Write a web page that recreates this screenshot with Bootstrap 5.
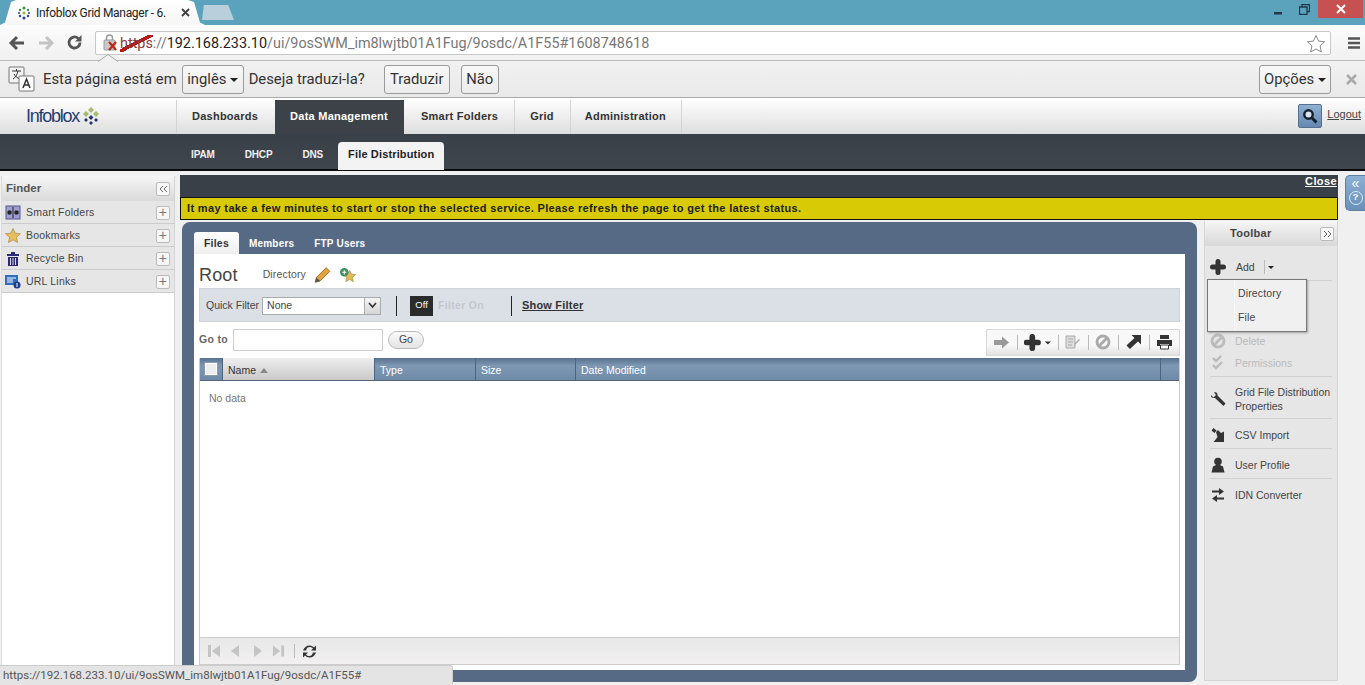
<!DOCTYPE html>
<html lang="pt">
<head>
    <meta charset="UTF-8">
    <meta name="viewport" content="width=device-width, initial-scale=1.0">
    <title>Infoblox Grid Manager</title>
    <link href="https://cdn.jsdelivr.net/npm/bootstrap@5.3.0/dist/css/bootstrap.min.css" rel="stylesheet">
    <style>
        html, body { height: 685px; overflow: hidden; }
        body { font-family: "Liberation Sans", Arial, sans-serif; font-size: 10.5px; color: #333; background: #f0f0f0; position: relative; width: 1365px; }

        /* browser chrome */
        .tab-strip { height: 25px; background: #5ba2bd; }
        .br-tab { width: 205px; height: 25px; background: linear-gradient(#fff, #f6f6f6); padding-left: 17px; font: 12px Roboto, sans-serif; color: #222; gap: 5px; clip-path: polygon(0 100%, 5px 90%, 11px 8%, 16px 0, 188px 0, 194px 8%, 200px 90%, 205px 100%); }
        .br-tab .tab-name { width: 140px; white-space: nowrap; overflow: hidden; letter-spacing: -.3px; }
        .new-tab { width: 32px; height: 15px; margin: 5px 0 0 -3px; background: #b9cfdc; clip-path: polygon(6% 0, 82% 0, 100% 100%, 0 100%); }
        .win-btns { margin-left: auto; padding-right: 2px; }
        .win-close { width: 45px; height: 18px; background: #c75050; }
        .win-ico { width: 27px; height: 19px; }
        .addr-row { height: 36px; background: linear-gradient(#fdfdfd, #f0f0f0); border-bottom: 1px solid #bcbcbc; padding-left: 2px; }
        .nav-ico { width: 29px; }
        .addr-box { width: 1236px; height: 24px; margin-left: 6px; background: #fff; border: 1px solid #c8c8c8; border-radius: 2px; font: 14.4px Roboto, sans-serif; color: #777; white-space: nowrap; padding: 1px 0 0 7px; }
        .addr-box b { font-weight: 400; color: #222; }
        .addr-url { margin-left: 1px; }
        .addr-box .bad-scheme { color: #8a3a3a; background: linear-gradient(to bottom right, transparent 42%, #b81818 42%, #b81818 54%, transparent 54%); }
        .trans-row { height: 37px; background: linear-gradient(#f1f1f1, #e9e9e9); border-bottom: 1px solid #aaa; font: 14.8px Roboto, sans-serif; color: #333; padding-left: 8px; white-space: nowrap; }
        .trans-btn { height: 29px; padding: 0; border: 1px solid #9a9a9a; border-radius: 3px; background: linear-gradient(#f8f8f8, #ececec); color: #333; font-size: 14.8px; }
        .btn-lang { width: 62px; margin: 0 5px; }
        .btn-yes { width: 66px; margin-left: 19px; }
        .btn-no { width: 38px; margin-left: 11px; }
        .btn-opts { width: 72px; margin-left: auto; }
        .bar-close { margin: 0 8px 0 15px; }
        .caret-dn { display: inline-block; width: 0; height: 0; border: 4px solid transparent; border-top-color: #222; border-bottom: 0; vertical-align: middle; }

        /* app header */
        .app-head { height: 36px; background: linear-gradient(#fff, #dedede); }
        .brand-box { width: 176px; padding-left: 26px; color: #1e3d73; font-size: 18px; letter-spacing: -1.25px; gap: 3px; }
        .main-tab { height: 34px; margin-top: 2px; padding-bottom: 2px !important; border-left: 1px solid #d4d4d4; font-size: 11px; font-weight: 700; color: #333; letter-spacing: .25px; white-space: nowrap; }
        .main-tab.on { background: #3c4248; color: #fff; border-left: 0; }
        .mt-dash { padding: 0 17px 0 15px; }
        .mt-data { padding: 0 16px 0 15px; }
        .mt-smart { padding: 0 16px 0 17px; border-left: 0; }
        .mt-grid { padding: 0 16px 0 15px; }
        .mt-admin { padding: 0 15px 0 14px; border-right: 1px solid #d4d4d4; }
        .head-right { margin-left: auto; padding: 6px 4px 0 0; gap: 5px; }
        .logout { font-size: 11px; color: #444; text-decoration: underline; margin-top: 2px; }
        .search-btn { width: 24px; height: 24px; background: linear-gradient(#8fb0d2, #6488b0); border: 1px solid #56708f; border-radius: 2px; }
        .sub-nav { height: 37px; background: linear-gradient(#3a4047, #3f454c); border-bottom: 2px solid #0c0c0c; padding-left: 176px; }
        .sub-item { padding: 5px 15px 0; color: #fff; font-size: 10px; font-weight: 700; letter-spacing: -.15px; height: 100%; opacity: .92; }
        .sub-item.on { background: #f3f3f3; color: #222; height: 28px; margin-top: 8px; padding: 0 10px 4px; border-radius: 4px 4px 0 0; font-size: 11px; letter-spacing: .15px; opacity: 1; align-self: flex-start; }

        /* finder */
        .work-area { height: 514px; }
        .finder-pane { width: 174px; margin-top: 5px; margin-left: 1px; background: #fff; border-right: 1px solid #d3d3d3; border-left: 1px solid #ddd; }
        .finder-head { height: 25px; background: linear-gradient(#f6f6f6, #d9d9d9); padding: 0 4px 0 4px; font-size: 11.5px; font-weight: 700; color: #555; letter-spacing: 0; }
        .finder-row { height: 23px; background: #e6e6e6; border-bottom: 1px solid #ccc; padding: 1px 4px 0 3px; font-size: 10.5px; color: #444; gap: 5px; letter-spacing: .2px; }
        .finder-row .plus-box { margin-left: auto; }
        .plus-box { width: 14px; height: 14px; background: #f7f7f7; border: 1px solid #bbb; border-radius: 2px; color: #777; font-size: 14px; line-height: 11px; text-align: center; }

        /* centre */
        .centre-pane { width: 1158px; margin-left: 5px; }
        .close-bar { height: 22px; margin-top: 4px; background: #3a4047; color: #fff; font-size: 11px; font-weight: 700; letter-spacing: .4px; line-height: 13px; text-align: right; padding: 0 1px 0 0; text-decoration: underline; }
        .warn-bar { height: 23px; background: #d8cb05; border: 1px solid #111; color: #222; font-size: 11px; font-weight: 700; padding-left: 6px; letter-spacing: .36px; line-height: 20px; }
        .blue-panel { width: 1015px; height: 460px; margin: 2px 0 0 2px; padding: 10px 12px 12px; background: #566a85; border-radius: 8px; }
        .panel-tabs { height: 22px; }
        .panel-tab { padding: 1px 10px 0; color: #fff; font-size: 10px; font-weight: 700; letter-spacing: .2px; }
        .panel-tab.on { background: linear-gradient(#fff, #eee); color: #333; border-radius: 3px 3px 0 0; font-size: 10.5px; }
        .panel-body { height: 416px; background: #fff; padding: 0 5px; }
        .title-row { height: 34px; padding-top: 8px; font-size: 10.5px; color: #555; letter-spacing: .15px; }
        .title-row h1 { font: 18px "Liberation Sans", sans-serif; color: #444; margin: 0 25px 0 0; }
        .filter-bar { height: 34px; background: #dbe0e7; border: 1px solid #cfd4da; padding: 1px 0 0 6px; font-size: 10.5px; color: #444; }
        .fake-select { width: 119px; height: 18px; background: #fff; border: 1px solid #aaa; margin-left: 3px; padding-left: 4px; }
        .sel-arrow { width: 16px; height: 16px; background: linear-gradient(#f5f5f5, #d5d5d5); border-left: 1px solid #aaa; margin-left: auto; }
        .v-sep { width: 1px; height: 20px; background: #222; }
        .sep-a { margin: 0 13px 0 15px; }
        .sep-b { margin: 0 10px 0 27px; }
        .off-tag { width: 23px; height: 20px; background: #2b2b2b; color: #fff; font-size: 9.5px; font-weight: 400; margin: 0 5px 0 0; }
        .filter-on { color: #c4c8cc; font-weight: 700; letter-spacing: .3px; }
        .show-filter { color: #333; font-size: 11px; font-weight: 700; letter-spacing: .2px; text-decoration: underline; }
        .goto-row { height: 36px; font-size: 10.5px; font-weight: 700; color: #666; letter-spacing: .3px; }
        .goto-input { width: 150px; height: 22px; background: #fff; border: 1px solid #ccc; margin: 0 5px; }
        .go-btn { width: 36px; height: 18px; border: 1px solid #bbb; border-radius: 9px; background: linear-gradient(#fafafa, #e3e3e3); color: #444; font-weight: 400; font-size: 10.5px; letter-spacing: 0; }
        .act-bar { margin-left: auto; width: 194px; height: 27px; margin-top: 4px; background: linear-gradient(#f8f8f8 60%, #e2e2e2); border: 1px solid #d8d8d8; padding: 0 6px; }
        .act-bar i { display: block; width: 1px; height: 15px; background: #bbb; }
        .grid-box { height: 307px; border: 1px solid #ccc; border-top: 0; }
        .grid-head { height: 23px; background: linear-gradient(#57718f, #7e98b3 35%, #6f8aa8); border-bottom: 1px solid #54657a; color: #fff; font-size: 10.5px; }
        .gcol { height: 100%; padding: 3px 0 0 5px; border-right: 1px solid #4d6480; }
        .gcol.chk { width: 23px; padding-top: 0; }
        .gcol.name { width: 152px; background: linear-gradient(#eee, #c9c9c9); color: #333; }
        .gcol.w-type { width: 101px; }
        .gcol.w-size { width: 100px; }
        .gcol.w-date { width: 585px; }
        .fake-chk { width: 12px; height: 12px; background: #eee; border: 1px solid #fff; outline: 1px solid #8a9bb0; }
        .grid-body { height: 256px; padding: 10px 9px; color: #777; font-size: 10.5px; }
        .grid-foot { height: 27px; background: linear-gradient(#e8e8e8, #f2f0f0); border-top: 1px solid #ccc; padding-left: 7px; gap: 9px; }
        .foot-sep { width: 1px; height: 14px; background: #bbb; margin-right: -2px; }

        /* toolbar */
        .tool-pane { width: 134px; height: 460px; margin: 1px 0 0 7px; background: #e6e6e6; border: 1px solid #d6d6d6; border-top: 0; }
        .tool-head { height: 25px; background: linear-gradient(#f5f5f5, #d8d8d8); font-size: 11px; font-weight: 700; color: #444; padding-left: 25px; padding-right: 3px; letter-spacing: .3px; }
        .tool-row { margin: 0 5px; gap: 9px; border-bottom: 1px solid #d0d0d0; font-size: 10.5px; color: #444; line-height: 14px; }
        .tool-row.off { color: #bbb; }
        .tool-row .ic { width: 16px; flex: none; }
        .add-row { height: 35px; padding-top: 8px; }
        .add-label { margin-left: 1px; }
        .add-sep { width: 1px; height: 14px; background: #bbb; }
        .add-caret { margin-left: -6px; border-width: 3px; border-bottom: 0; }
        .gap-row { height: 49px; border: 0; }
        .r1 { height: 22px; border: 0; }
        .r2 { height: 25px; padding-bottom: 2px; }
        .r3 { height: 42px; padding-top: 2px; }
        .r4 { height: 30px; padding-top: 2px; }

        .side-handle { width: 20px; height: 36px; margin: 4px 0 0 7px; background: linear-gradient(#8db0d4, #6a90b8); border: 1px solid #5f80a5; border-right: 0; border-radius: 5px 0 0 5px; color: #fff; font-size: 14px; line-height: 14px; text-align: center; }
        .help-dot { width: 14px; height: 14px; margin: 1px auto 0; border: 1.5px solid #d8e8f6; border-radius: 50%; font-size: 9px; font-weight: 700; line-height: 11px; }

        /* overlays */
        .omni-notch { position: absolute; left: 98px; top: 54px; }
        .add-menu { position: absolute; left: 1207px; top: 279px; width: 100px; height: 53px; background: linear-gradient(90deg, #f0f0f0 25px, #dcdcdc 25px, #fff 26px, #f0f0f0 27px); border: 1px solid #777; box-shadow: 1px 1px 2px rgba(0,0,0,.3); font-size: 10.5px; color: #444; }
        .add-menu div { padding-left: 30px; height: 24px; line-height: 26px; letter-spacing: .15px; }
        .status-bubble { position: absolute; left: 0; top: 665px; width: 453px; height: 20px; background: #e4e4e4; border-top: 1px solid #ccc; border-right: 1px solid #ccc; border-radius: 0 3px 0 0; font: 11.5px Roboto, sans-serif; color: #555; padding: 2px 0 0 3px; white-space: nowrap; }
    </style>
</head>
<body>
    <div class="tab-strip d-flex">
        <div class="br-tab d-flex align-items-center">
            <svg width="14" height="14" viewBox="0 0 14 14"><g fill="#3f8f4f"><circle cx="7" cy="2" r="1.500"/><circle cx="3" cy="4" r="1.200"/><circle cx="11" cy="4" r="1.200"/></g><circle cx="7" cy="7" r="1.600" fill="#9ab84a"/><g fill="#2c3f8f"><circle cx="3" cy="10" r="1.200"/><circle cx="11" cy="10" r="1.200"/><circle cx="7" cy="12" r="1.500"/><circle cx="2" cy="7" r="1"/><circle cx="12" cy="7" r="1"/></g></svg>
            <span class="tab-name">Infoblox Grid Manager - 6.</span>
            <svg width="9" height="9" viewBox="0 0 9 9"><path d="M1 1l7 7M8 1l-7 7" stroke="#444" stroke-width="2"/></svg>
        </div>
        <div class="new-tab"></div>
        <div class="win-btns d-flex align-items-start">
            <div class="win-ico d-flex align-items-center justify-content-center"><svg width="10" height="10" viewBox="0 0 10 10"><rect x="1" y="7" width="8" height="2.500" fill="#22384a"/></svg></div>
            <div class="win-ico d-flex align-items-center justify-content-center"><svg width="11" height="11" viewBox="0 0 11 11"><path d="M3 2.500V.5h7.500v7H8M.5 3h7.500v7.500H.5z" fill="none" stroke="#22384a" stroke-width="1.300"/></svg></div>
            <div class="win-close d-flex align-items-center justify-content-center"><svg width="10" height="10" viewBox="0 0 10 10"><path d="M1 1l8 8M9 1l-8 8" stroke="#fff" stroke-width="2"/></svg></div>
        </div>
    </div>

    <div class="addr-row d-flex align-items-center">
        <div class="nav-ico d-flex justify-content-center"><svg width="18" height="16" viewBox="0 0 18 16"><path d="M16 8H4M9 2L3 8l6 6" fill="none" stroke="#555" stroke-width="3"/></svg></div>
        <div class="nav-ico d-flex justify-content-center"><svg width="18" height="16" viewBox="0 0 18 16"><path d="M2 8h12M9 2l6 6-6 6" fill="none" stroke="#c4c4c4" stroke-width="3"/></svg></div>
        <div class="nav-ico d-flex justify-content-center"><svg width="17" height="17" viewBox="0 0 17 17"><path d="M14 8.500a5.500 5.500 0 1 1-1.700-4" fill="none" stroke="#555" stroke-width="2.800"/><path d="M15.500 1v6.500H9z" fill="#555"/></svg></div>
        <div class="addr-box d-flex align-items-center">
            <svg width="16" height="18" viewBox="0 0 16 18"><rect x="1" y="6" width="11" height="10" rx="1" fill="#c9c9c9" stroke="#999"/><path d="M3.500 6V4a3 3 0 0 1 6 0v2" fill="none" stroke="#999" stroke-width="1.500"/><path d="M6 8l7 8M13 8l-7 8" stroke="#c0271f" stroke-width="2.200"/></svg>
            <span class="addr-url"><span class="bad-scheme">https</span>://<b>192.168.233.10</b>/ui/9osSWM_im8lwjtb01A1Fug/9osdc/A1F55#1608748618</span>
            <svg class="ms-auto me-1" width="20" height="19" viewBox="0 0 20 19"><path d="M10 1.500l2.600 5.600 6 .7-4.500 4.100 1.200 6L10 15l-5.300 2.900 1.200-6L1.400 7.800l6-.7z" fill="#fff" stroke="#888"/></svg>
        </div>
        <svg class="ms-3" width="14" height="14" viewBox="0 0 14 14"><path d="M1 2.500h12M1 7h12M1 11.500h12" stroke="#555" stroke-width="2.600"/></svg>
    </div>

    <div class="trans-row d-flex align-items-center">
        <svg width="27" height="26" viewBox="0 0 27 26"><rect x="1" y="1" width="15" height="16" rx="1" fill="#f3f3f3" stroke="#777"/><path d="M4 5h9M8.500 3v2M5 13c3-2 4-4 5-8M6 8c1 2 3 4 6 5" fill="none" stroke="#333"/><rect x="11" y="10" width="15" height="15" rx="1" fill="#fff" stroke="#777"/><path d="M15 22l3.500-9 3.500 9M16 19h5" fill="none" stroke="#333" stroke-width="1.500"/></svg>
        <span class="ms-2">Esta página está em</span>
        <button class="trans-btn btn-lang">inglês <span class="caret-dn"></span></button>
        <span>Deseja traduzi-la?</span>
        <button class="trans-btn btn-yes">Traduzir</button>
        <button class="trans-btn btn-no">Não</button>
        <button class="trans-btn btn-opts">Opções <span class="caret-dn"></span></button>
        <svg class="bar-close" width="11" height="11" viewBox="0 0 11 11"><path d="M1 1l9 9M10 1l-9 9" stroke="#aaa" stroke-width="2.600"/></svg>
    </div>

    <div class="app-head d-flex">
        <div class="brand-box d-flex align-items-center">Infoblox
            <svg width="18" height="18" viewBox="0 0 18 18"><g fill="#a4bd6b"><path d="M9 0l3 3-3 3-3-3z"/><path d="M4 4l3 3-3 3-3-3z"/><path d="M14 4l3 3-3 3-3-3z"/></g><g fill="#24386f"><path d="M9 8l2.500 2.500L9 13l-2.500-2.500z"/><path d="M4 11l2 2-2 2-2-2z"/><path d="M14 11l2 2-2 2-2-2z"/><path d="M9 14l2 2-2 2-2-2z"/></g></svg>
        </div>
        <div class="main-tab mt-dash d-flex align-items-center">Dashboards</div>
        <div class="main-tab mt-data on d-flex align-items-center">Data Management</div>
        <div class="main-tab mt-smart d-flex align-items-center">Smart Folders</div>
        <div class="main-tab mt-grid d-flex align-items-center">Grid</div>
        <div class="main-tab mt-admin d-flex align-items-center">Administration</div>
        <div class="head-right d-flex align-items-start">
            <div class="search-btn d-flex align-items-center justify-content-center"><svg width="16" height="16" viewBox="0 0 16 16"><circle cx="6.500" cy="6.500" r="4.200" fill="#d8e4ef" stroke="#14202e" stroke-width="2.400"/><path d="M10 10l4.500 4.500" stroke="#14202e" stroke-width="3"/></svg></div>
            <span class="logout">Logout</span>
        </div>
    </div>

    <div class="sub-nav d-flex align-items-center">
        <div class="sub-item d-flex align-items-center">IPAM</div>
        <div class="sub-item d-flex align-items-center">DHCP</div>
        <div class="sub-item d-flex align-items-center">DNS</div>
        <div class="sub-item on d-flex align-items-center">File Distribution</div>
    </div>

    <div class="work-area d-flex">
        <div class="finder-pane flex-shrink-0">
            <div class="finder-head d-flex align-items-center justify-content-between">Finder
                <span class="plus-box d-flex align-items-center justify-content-center"><svg width="9" height="8" viewBox="0 0 9 8"><path d="M4 1L1 4l3 3M8 1L5 4l3 3" fill="none" stroke="#666"/></svg></span></div>
            <div class="finder-row d-flex align-items-center">
                <svg width="16" height="15" viewBox="0 0 16 15"><rect x="1" y="1" width="14" height="13" fill="#9d9ecf" stroke="#55558c"/><path d="M3 6h3v3H3zM10 6h3v3h-3zM8 2v11" fill="#222" stroke="#222"/></svg>Smart Folders<span class="plus-box">+</span></div>
            <div class="finder-row d-flex align-items-center">
                <svg width="16" height="15" viewBox="0 0 16 15"><path d="M8 .5l2.200 4.700 5.200.6-3.900 3.500 1.100 5.200L8 11.900l-4.600 2.600 1.100-5.200L.6 5.800l5.200-.6z" fill="#e7bd5e" stroke="#a8884a" stroke-width=".7"/></svg>Bookmarks<span class="plus-box">+</span></div>
            <div class="finder-row d-flex align-items-center">
                <svg width="16" height="16" viewBox="0 0 16 16"><path d="M2 3h12v2H2zM6 1h4v2H6z" fill="#2b2a77"/><path d="M3 6h10v9H3z" fill="#2b2a77"/><path d="M5.500 7v7M8 7v7M10.500 7v7" stroke="#dcdcf0"/></svg>Recycle Bin<span class="plus-box">+</span></div>
            <div class="finder-row d-flex align-items-center">
                <svg width="16" height="15" viewBox="0 0 16 15"><rect x="0" y="1" width="13" height="10" fill="#2f6fc0"/><path d="M2 4h9M2 6h6M2 8h6" stroke="#fff"/><circle cx="12" cy="11" r="3.500" fill="#1b3f90"/><path d="M12 9v4" stroke="#fff"/></svg>URL Links<span class="plus-box">+</span></div>
        </div>

        <div class="centre-pane flex-shrink-0">
            <div class="close-bar">Close</div>
            <div class="warn-bar">It may take a few minutes to start or stop the selected service. Please refresh the page to get the latest status.</div>
            <div class="d-flex">
                <div class="blue-panel flex-shrink-0">
                    <div class="panel-tabs d-flex">
                        <div class="panel-tab on d-flex align-items-center">Files</div>
                        <div class="panel-tab d-flex align-items-center">Members</div>
                        <div class="panel-tab d-flex align-items-center">FTP Users</div>
                    </div>
                    <div class="panel-body">
                        <div class="title-row d-flex align-items-center">
                            <h1>Root</h1><span>Directory</span>
                            <svg class="ms-2" width="17" height="18" viewBox="1 1 14 14"><path d="M2 14l1-4 8-8 3 3-8 8z" fill="#e2a23f" stroke="#a66c20" stroke-width=".8"/><path d="M2 14l1-4 3 3z" fill="#555"/></svg>
                            <svg class="ms-2" width="18" height="17" viewBox="0 0 17 16"><path d="M10 3l1.700 3.700 4 .4-3 2.700.9 4-3.600-2.100-3.600 2.100.9-4-3-2.700 4-.4z" fill="#e4b95a" stroke="#a8884a" stroke-width=".6"/><circle cx="5" cy="5" r="4" fill="#3f8f5f"/><path d="M3 5h4M5 3v4" stroke="#fff"/></svg>
                        </div>
                        <div class="filter-bar d-flex align-items-center">
                            <span>Quick Filter</span>
                            <div class="fake-select d-flex align-items-center">None<span class="sel-arrow d-flex align-items-center justify-content-center"><svg width="9" height="7" viewBox="0 0 9 7"><path d="M1 1l3.500 4L8 1" fill="none" stroke="#333" stroke-width="1.600"/></svg></span></div>
                            <span class="v-sep sep-a"></span>
                            <span class="off-tag d-flex align-items-center justify-content-center">Off</span>
                            <span class="filter-on">Filter On</span>
                            <span class="v-sep sep-b"></span>
                            <span class="show-filter">Show Filter</span>
                        </div>
                        <div class="goto-row d-flex align-items-center">
                            <span>Go to</span>
                            <div class="goto-input"></div>
                            <div class="go-btn d-flex align-items-center justify-content-center">Go</div>
                            <div class="act-bar d-flex align-items-center justify-content-between">
                                <svg width="17" height="15" viewBox="0 0 17 14"><path d="M1 4.500h8V1l7 6-7 6V9.500H1z" fill="#9a9a9a"/></svg><i></i>
                                <svg width="27" height="17" viewBox="0 0 26 16"><path d="M8 2.500v11M2.500 8h11" stroke="#333" stroke-width="5.500" stroke-linecap="round"/><path d="M20 7h6l-3 3z" fill="#333"/></svg><i></i>
                                <svg width="16" height="14" viewBox="0 0 16 14"><path d="M1 1h9v12H1zM3 4h5M3 7h5M3 10h4" fill="#ddd" stroke="#aaa"/><path d="M9 9l5-5 1 1-5 5z" fill="#aaa"/></svg><i></i>
                                <svg width="16" height="16" viewBox="0 0 16 16"><circle cx="8" cy="8" r="6" fill="none" stroke="#aaa" stroke-width="2.800"/><path d="M4 12l8-8" stroke="#aaa" stroke-width="2.800"/></svg><i></i>
                                <svg width="17" height="16" viewBox="0 0 17 16"><path d="M6.500 1H16v9.500L13 7.500 7 13 3.500 9.500 9.500 4zM1.500 11.500l2-2 3.500 3.500-2 2z" fill="#333"/></svg><i></i>
                                <svg width="17" height="16" viewBox="0 0 17 16"><path d="M4 1h9v4H4zM1 6h15v6h-3v-2H4v2H1z" fill="#333"/><path d="M4.500 11h8v4h-8z" fill="#fff" stroke="#333"/></svg>
                            </div>
                        </div>
                        <div class="grid-box">
                            <div class="grid-head d-flex align-items-center">
                                <div class="gcol chk d-flex align-items-center"><span class="fake-chk"></span></div>
                                <div class="gcol name d-flex align-items-center">Name <svg class="ms-1" width="8" height="5" viewBox="0 0 8 5"><path d="M0 5l4-5 4 5z" fill="#888"/></svg></div>
                                <div class="gcol w-type d-flex align-items-center">Type</div>
                                <div class="gcol w-size d-flex align-items-center">Size</div>
                                <div class="gcol w-date d-flex align-items-center">Date Modified</div>
                            </div>
                            <div class="grid-body">No data</div>
                            <div class="grid-foot d-flex align-items-center">
                                <svg width="14" height="14" viewBox="0 0 14 14"><path d="M1 1h3v12H1zM13 1v12L5 7z" fill="#c4c4c4"/></svg>
                                <svg width="10" height="14" viewBox="0 0 10 14"><path d="M9 1v12L1 7z" fill="#c4c4c4"/></svg>
                                <svg class="ms-1" width="10" height="14" viewBox="0 0 10 14"><path d="M1 1v12l8-6z" fill="#c4c4c4"/></svg>
                                <svg width="13" height="14" viewBox="0 0 14 14"><path d="M1 1v12l8-6zM10 1h3v12h-3z" fill="#c4c4c4"/></svg>
                                <span class="foot-sep"></span>
                                <svg width="15" height="15" viewBox="0 0 15 14"><path d="M1 6c1-3 3.500-5 6.500-5 2 0 3.500 1 4.500 2l2-2v5H9l2-2c-1-1-2-1.500-3.500-1.500S4.500 3.500 4 6zM14 8c-1 3-3.500 5-6.500 5-2 0-3.500-1-4.500-2l-2 2V8h5L4 10c1 1 2 1.500 3.500 1.500S10.500 10.500 11 8z" fill="#333"/></svg>
                            </div>
                        </div>
                    </div>
                </div>

                <div class="tool-pane flex-shrink-0">
                    <div class="tool-head d-flex align-items-center">Toolbar<span class="plus-box ms-auto d-flex align-items-center justify-content-center"><svg width="9" height="8" viewBox="0 0 9 8"><path d="M1 1l3 3-3 3M5 1l3 3-3 3" fill="none" stroke="#666"/></svg></span></div>
                    <div class="tool-row add-row d-flex align-items-center">
                        <svg class="ic" width="16" height="16" viewBox="0 0 16 16"><path d="M8 2.500v11M2.500 8h11" stroke="#333" stroke-width="5" stroke-linecap="round"/></svg>
                        <span class="add-label">Add</span>
                        <span class="add-sep"></span>
                        <span class="caret-dn add-caret"></span>
                    </div>
                    <div class="tool-row gap-row"></div>
                    <div class="tool-row off r1 d-flex align-items-center">
                        <svg class="ic" width="16" height="16" viewBox="0 0 16 16"><circle cx="8" cy="8" r="6" fill="none" stroke="#bbb" stroke-width="2.800"/><path d="M4 12l8-8" stroke="#bbb" stroke-width="2.800"/></svg>Delete</div>
                    <div class="tool-row off r2 d-flex align-items-center">
                        <svg class="ic" width="16" height="16" viewBox="0 0 16 16"><path d="M3 3l3 3 5-5M3 10l3 3 6-6" fill="none" stroke="#bbb" stroke-width="2.400"/></svg>Permissions</div>
                    <div class="tool-row r3 d-flex align-items-center">
                        <svg class="ic" width="16" height="16" viewBox="0 0 16 16"><path d="M1 4l2.500 2.500L6 4 4 1.500C6 .5 8 2 7.500 4.500l8 8-2 2.500-8.500-8C2.500 7.500.5 6 1 4z" fill="#333"/></svg><span>Grid File Distribution Properties</span></div>
                    <div class="tool-row r4 d-flex align-items-center">
                        <svg class="ic" width="16" height="16" viewBox="0 0 16 16"><path d="M3.500 1l3 2.500-2 2.500-3-2.500zM6 5l2-2 3 3 3-1.500V15H3.500l2.500-3 1.500-2z" fill="#333"/></svg>CSV Import</div>
                    <div class="tool-row r4 d-flex align-items-center">
                        <svg class="ic" width="16" height="16" viewBox="0 0 16 16"><circle cx="8" cy="4.500" r="3.800" fill="#333"/><path d="M1.500 15.500L3 9.500 6 8h4l3 1.500 1.500 6z" fill="#333"/></svg>User Profile</div>
                    <div class="tool-row r4 border-0 d-flex align-items-center">
                        <svg class="ic" width="16" height="16" viewBox="0 0 16 16"><path d="M2 3.500h7V1l5 3.500L9 8V5.500H2zM14 10.500H7V8l-5 3.500L7 15v-2.500h7z" fill="#333"/></svg>IDN Converter</div>
                </div>
            </div>
        </div>

        <div class="side-handle flex-shrink-0">«<div class="help-dot">?</div></div>
    </div>

    <svg class="omni-notch" width="20" height="8" viewBox="0 0 20 8"><path d="M0 7.500L10 .5l10 7" fill="#f1f1f1" stroke="#aaa"/></svg>
    <div class="add-menu">
        <div>Directory</div>
        <div>File</div>
    </div>
    <div class="status-bubble">https://192.168.233.10/ui/9osSWM_im8lwjtb01A1Fug/9osdc/A1F55#</div>

    <script src="https://cdn.jsdelivr.net/npm/bootstrap@5.3.0/dist/js/bootstrap.bundle.min.js"></script>
</body>
</html>
